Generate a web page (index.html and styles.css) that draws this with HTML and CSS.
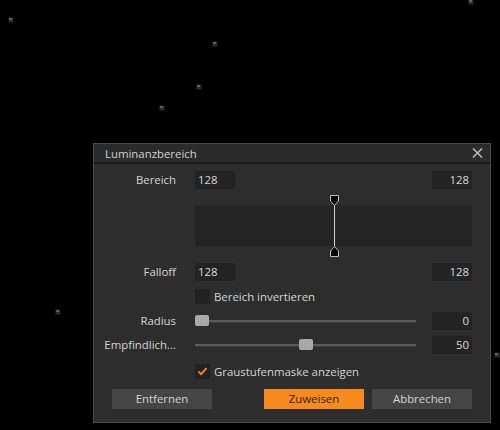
FILE: index.html
```html
<!DOCTYPE html>
<html>
<head>
<meta charset="utf-8">
<link rel="stylesheet" href="styles.css">
</head>
<body>
<div class="speck s1"></div>
<div class="speck s2"></div>
<div class="speck s3"></div>
<div class="speck s4"></div>
<div class="speck s5"></div>
<div class="speck s6"></div>
<div class="speck s7"></div>

<div class="dialog">
  <div class="titlebar">
    <span class="title">Luminanzbereich</span>
    <svg class="close" width="11" height="10" viewBox="0 0 11 10"><path d="M1 0.5 L10 9.5 M10 0.5 L1 9.5" stroke="#bdbdbd" stroke-width="1.5" fill="none"/></svg>
  </div>
  <div class="content">
    <div class="row r1">
      <div class="lbl">Bereich</div>
      <div class="ctl split">
        <div class="num numl">128</div>
        <div class="num">128</div>
      </div>
    </div>
    <div class="row graphrow">
      <div class="lbl"></div>
      <div class="ctl graph">
        <div class="plot"></div>
        <div class="marker">
          <svg width="11" height="63" viewBox="0 0 11 63">
            <line x1="5.5" y1="10" x2="5.5" y2="52" stroke="#cfcfcf" stroke-width="1"/>
            <path d="M1.5 0.5 H9.5 V6 L5.5 10.5 L1.5 6 Z" fill="#000" stroke="#bdbdbd" stroke-width="1"/>
            <path d="M1.5 61.5 H9.5 V56 L5.5 51.5 L1.5 56 Z" fill="#000" stroke="#bdbdbd" stroke-width="1"/>
          </svg>
        </div>
      </div>
    </div>
    <div class="row r3">
      <div class="lbl">Falloff</div>
      <div class="ctl split">
        <div class="num numl">128</div>
        <div class="num">128</div>
      </div>
    </div>
    <div class="row r4">
      <div class="lbl"></div>
      <div class="ctl check">
        <div class="box"></div>
        <span>Bereich invertieren</span>
      </div>
    </div>
    <div class="row r5">
      <div class="lbl">Radius</div>
      <div class="ctl slider">
        <div class="track"><div class="thumb" style="left:0px"></div></div>
        <div class="num">0</div>
      </div>
    </div>
    <div class="row r6">
      <div class="lbl">Empfindlich...</div>
      <div class="ctl slider">
        <div class="track"><div class="thumb" style="left:104px"></div></div>
        <div class="num">50</div>
      </div>
    </div>
    <div class="row r7">
      <div class="lbl"></div>
      <div class="ctl check">
        <div class="box">
          <svg width="15" height="15" viewBox="0 0 15 15"><path d="M3.5 7.5 L6.2 10.2 L11.5 4.2" stroke="#f28a1a" stroke-width="1.8" fill="none"/></svg>
        </div>
        <span>Graustufenmaske anzeigen</span>
      </div>
    </div>
    <div class="buttons">
      <div class="btn">Entfernen</div>
      <div class="btn primary">Zuweisen</div>
      <div class="btn">Abbrechen</div>
    </div>
  </div>
</div>
</body>
</html>
```

FILE: styles.css
```css
html, body {
  margin: 0;
  padding: 0;
  background: #000;
}
body {
  width: 500px;
  height: 430px;
  overflow: hidden;
  position: relative;
  font-family: "Open Sans", "Noto Sans", sans-serif;
  font-size: 11.4px;
  color: #d4d4d4;
}
.speck {
  position: absolute;
  width: 4px;
  height: 4px;
  background: #2e2e2e;
  box-shadow: 0 0 1px 1px #111;
}
.speck::after {
  content: "";
  position: absolute;
  left: 0;
  top: 0;
  width: 3px;
  height: 2px;
  background: #5e5e5e;
}
.s1 { left: 9px; top: 18px; }
.s2 { left: 213px; top: 42px; }
.s3 { left: 197px; top: 85px; }
.s4 { left: 160px; top: 106px; }
.s5 { left: 469px; top: 0px; }
.s6 { left: 56px; top: 310px; }
.s7 { left: 495px; top: 353px; }

.dialog {
  box-sizing: border-box;
  margin-left: 93px;
  margin-top: 143px;
  width: 398px;
  height: 280px;
  background: #2d2d2d;
  border: 1px solid #4b4b4b;
  display: flex;
  flex-direction: column;
}
.titlebar {
  height: 18px;
  display: flex;
  align-items: center;
  justify-content: space-between;
  padding: 0 7px 0 11px;
  background: #2b2b2b;
  border-bottom: 2px solid #1c1c1c;
  color: #d0d0d0;
}
.title {
  line-height: 18px;
  padding-top: 1px;
}
.close {
  display: block;
}
.content {
  display: flex;
  flex-direction: column;
  padding: 7px 18px 0 0;
}
.row {
  display: flex;
  align-items: center;
  height: 18px;
  gap: 19px;
}
.lbl {
  width: 82px;
  flex: none;
  text-align: right;
  line-height: 18px;
  white-space: nowrap;
}
.ctl {
  width: 277px;
  flex: none;
  height: 100%;
}
.split {
  display: flex;
  justify-content: space-between;
}
.num {
  box-sizing: border-box;
  width: 40px;
  height: 18px;
  background: #232323;
  line-height: 18px;
  text-align: right;
  padding: 0 3px;
  color: #d8d8d8;
}
.numl {
  text-align: left;
}
.graphrow {
  height: 62px;
  margin-top: 6px;
}
.graph {
  position: relative;
  display: flex;
  align-items: center;
}
.plot {
  width: 100%;
  height: 40px;
  background: #242424;
  border-top: 1px solid #292929;
  border-bottom: 1px solid #292929;
}
.marker {
  position: absolute;
  left: 134px;
  top: 0;
  width: 11px;
  height: 63px;
}
.marker svg { display: block; }
.r3 { margin-top: 6px; }
.r4 { margin-top: 6px; }
.r5 { margin-top: 7px; }
.r6 { margin-top: 6px; }
.r7 { margin-top: 8px; }
.check {
  display: flex;
  align-items: center;
  gap: 4px;
}
.box {
  width: 15px;
  height: 15px;
  background: #222;
  flex: none;
}
.box svg { display: block; }
.slider {
  display: flex;
  align-items: center;
  gap: 16px;
}
.track {
  position: relative;
  width: 221px;
  height: 2px;
  background: #5a5a5a;
  border-bottom: 1px solid #3a3a3a;
}
.thumb {
  position: absolute;
  top: -5px;
  width: 14px;
  height: 11px;
  border-radius: 2px;
  background: #a8a8a8;
}
.buttons {
  display: flex;
  margin-top: 9px;
  margin-left: 18px;
  gap: 8px;
}
.btn {
  width: 100px;
  height: 20px;
  line-height: 20px;
  text-align: center;
  background: #454545;
  color: #d2d2d2;
}
.btn.primary {
  margin-left: auto;
  background: #f68a1e;
  color: #2e2416;
}
```
